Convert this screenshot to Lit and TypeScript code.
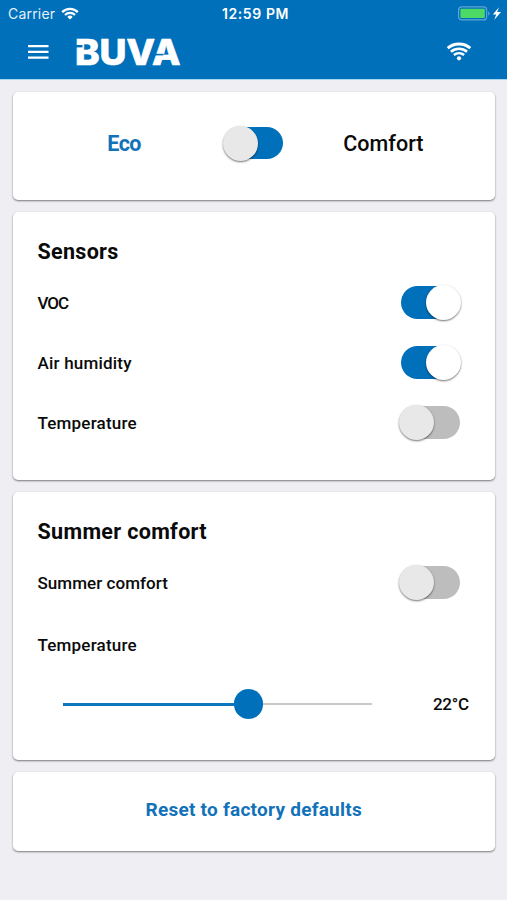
import { LitElement, html, css } from "lit";
import { customElement, property } from "lit/decorators.js";

@customElement("toggle-switch")
class ToggleSwitch extends LitElement {
  @property({ type: Boolean }) on = false;
  @property({ type: Boolean }) tinted = false;

  static styles = css`
    :host {
      display: block;
      flex: none;
    }
    .track {
      position: relative;
      width: 59px;
      height: 32.5px;
      border-radius: 17px;
      background: #bdbdbd;
    }
    .blue {
      background: #0070ba;
    }
    .knob {
      position: absolute;
      top: -1.2px;
      left: -1.2px;
      width: 35px;
      height: 35px;
      border-radius: 50%;
      background: #e8e8e8;
      box-shadow: 0 1px 2px rgba(0, 0, 0, 0.55);
    }
    .right {
      left: 25.7px;
      background: #fff;
    }
  `;

  render() {
    return html`<div class="track ${this.on || this.tinted ? "blue" : ""}">
      <div class="knob ${this.on ? "right" : ""}"></div>
    </div>`;
  }
}

@customElement("app-root")
class AppRoot extends LitElement {
  sensors = [
    { label: "VOC", cls: "voc", on: true },
    { label: "Air humidity", cls: "air", on: true },
    { label: "Temperature", cls: "temp", on: false },
  ];
  level = 60;

  static styles = css`
    :host {
      display: block;
      height: 900px;
      background: #efeef3;
      color: #0a0a0a;
      font-family: Roboto, "Liberation Sans", sans-serif;
      overflow: hidden;
    }
    .top {
      box-sizing: border-box;
      height: 80px;
      background: #0070ba;
      border-bottom: 1px solid #a5d8f0;
      color: #fff;
    }
    .status {
      display: grid;
      grid-template-columns: 1fr auto 1fr;
      align-items: center;
      height: 27px;
      padding: 0 5px 0 8px;
      font-family: Inter, sans-serif;
      font-size: 14px;
    }
    .carrier {
      display: flex;
      align-items: center;
      gap: 6px;
      letter-spacing: 0.2px;
      color: #e4f1fa;
    }
    .clock {
      font-weight: 600;
      font-size: 14px;
      letter-spacing: 0.6px;
      padding-left: 1px;
    }
    .power {
      display: flex;
      justify-content: flex-end;
      align-items: center;
    }
    svg {
      display: block;
      flex: none;
    }
    .bar {
      display: flex;
      align-items: center;
      height: 50px;
      padding: 0 35px 0 27.5px;
    }
    .logo {
      margin-left: 26px;
    }
    .logo text {
      font-family: Inter, sans-serif;
      font-weight: 800;
      font-size: 36px;
    }
    .net {
      margin-left: auto;
    }
    .cards {
      display: flex;
      flex-direction: column;
      gap: 12px;
      padding: 12px 12.5px 0 13px;
    }
    .card {
      box-sizing: border-box;
      background: #fff;
      border-radius: 5px;
      box-shadow: 0 1px 2px rgba(0, 0, 0, 0.5);
      padding: 0 35px 0 24.5px;
    }
    .mode {
      height: 108px;
      display: grid;
      grid-template-columns: 1fr 59px 1fr;
      padding: 0 0 6px;
      align-items: center;
      justify-items: center;
      font-size: 21.5px;
      font-weight: 500;
    }
    .eco {
      color: #1272b9;
      font-weight: 700;
      letter-spacing: -0.5px;
      padding-left: 11px;
    }
    .comfort {
      letter-spacing: 0.05px;
      padding-right: 11px;
    }
    .group {
      height: 268px;
      padding-top: 26px;
    }
    .title {
      margin: 0;
      font-size: 21.5px;
      line-height: 28px;
      font-weight: 700;
    }
    .sensors-title {
      letter-spacing: 0.3px;
    }
    .summer-title {
      letter-spacing: 0.33px;
    }
    .row {
      display: flex;
      align-items: center;
      justify-content: space-between;
      height: 60px;
      font-size: 17px;
      font-weight: 500;
    }
    .rows {
      padding-top: 6.5px;
    }
    .low {
      height: 64px;
    }
    .voc {
      letter-spacing: -1.1px;
    }
    .air {
      letter-spacing: 0.2px;
    }
    .temp {
      letter-spacing: 0.2px;
    }
    .summer {
      letter-spacing: 0.05px;
    }
    .slider-row {
      display: flex;
      align-items: center;
      height: 55px;
      padding-left: 25px;
      margin-right: -9.5px;
      font-size: 17px;
      font-weight: 500;
    }
    .slider {
      position: relative;
      display: flex;
      align-items: center;
      width: 309.5px;
      height: 30px;
    }
    .line {
      width: 100%;
      height: 2px;
      background: #c9c9c9;
    }
    .fill {
      position: absolute;
      left: 0;
      height: 3px;
      background: #0d77bd;
    }
    .thumb {
      position: absolute;
      width: 29.5px;
      height: 29.5px;
      margin-left: -14.5px;
      border-radius: 50%;
      background: #0070ba;
    }
    .degrees {
      margin-left: auto;
      letter-spacing: -0.2px;
    }
    .reset {
      height: 79px;
      display: flex;
      align-items: center;
      justify-content: center;
      padding: 0 0 3.5px;
      color: #1272b9;
      font-size: 19px;
      font-weight: 700;
      letter-spacing: 0.25px;
    }
  `;

  row(label: string, cls: string, on: boolean) {
    return html`<div class="row">
      <span class=${cls}>${label}</span>
      <toggle-switch ?on=${on}></toggle-switch>
    </div>`;
  }

  render() {
    return html`
      <header class="top">
        <div class="status">
          <div class="carrier">
            <span>Carrier</span>
            <svg width="18" height="13" viewBox="0 0 18 13" fill="none" stroke="#fff" stroke-width="2.3">
              <path d="M1.2 5.1a11 11 0 0 1 15.6 0" />
              <path d="M4 8a7.1 7.1 0 0 1 10 0" />
              <path d="M9 12.6 6.3 9.9a3.9 3.9 0 0 1 5.4 0z" fill="#fff" stroke="none" />
            </svg>
          </div>
          <span class="clock">12:59 PM</span>
          <div class="power">
            <svg width="44" height="16" viewBox="0 0 44 16">
              <rect x="0.6" y="0.9" width="28" height="13" rx="3" fill="none" stroke="#5da5d6" stroke-width="1.2" />
              <rect x="2.4" y="2.7" width="24.4" height="9.4" rx="1" fill="#4cd964" />
              <path d="M30.2 5.3c2 .8 2 3.6 0 4.4z" fill="#5da5d6" />
              <path d="M41 1.2 34.800 8.400h3.400L36.200 14l6.800-8h-3.800z" fill="#fff" />
            </svg>
          </div>
        </div>
        <div class="bar">
          <svg width="21" height="16" viewBox="0 0 21 16" fill="#fff">
            <path d="M0 1h20.5v2.3H0zM0 6.800h20.5v2.3H0zM0 12.5h20.5v2.3H0z" />
          </svg>
          <svg class="logo" width="112" height="42" viewBox="0 -6 112 42">
            <text x="0" y="28.4" fill="#fff" stroke="#fff" stroke-width="0.7" textLength="105.5" lengthAdjust="spacingAndGlyphs">BUVA</text>
            <path d="M0 8h7.500v2.4H0z" fill="#0070ba" />
            <path d="M79.5 16.8h9v1.6h-9z" fill="#0070ba" />
          </svg>
          <svg class="net" width="26" height="20" viewBox="0 0 26 20" fill="none" stroke="#fff" stroke-width="2.6">
            <path d="M1.700 6.100c6.500-5.500 16.100-5.500 22.600 0" stroke-width="2.900" />
            <path d="M4.900 9.700c4.700-4 11.500-4 16.200 0" />
            <path d="M7.900 13.100c3-2.500 7.200-2.500 10.200 0" />
            <circle cx="13" cy="16.300" r="2.1" fill="#fff" stroke="none" />
          </svg>
        </div>
      </header>
      <main class="cards">
        <section class="card mode">
          <span class="eco">Eco</span>
          <toggle-switch tinted></toggle-switch>
          <span class="comfort">Comfort</span>
        </section>
        <section class="card group">
          <h2 class="title sensors-title">Sensors</h2>
          <div class="rows">${this.sensors.map((s) => this.row(s.label, s.cls, s.on))}</div>
        </section>
        <section class="card group">
          <h2 class="title summer-title">Summer comfort</h2>
          <div class="rows">
            ${this.row("Summer comfort", "summer", false)}
            <div class="row low"><span class="temp">Temperature</span></div>
          </div>
          <div class="slider-row">
            <div class="slider">
              <div class="line"></div>
              <div class="fill" style="width:${this.level}%"></div>
              <div class="thumb" style="left:${this.level}%"></div>
            </div>
            <span class="degrees">22°C</span>
          </div>
        </section>
        <section class="card reset">Reset to factory defaults</section>
      </main>
    `;
  }
}
